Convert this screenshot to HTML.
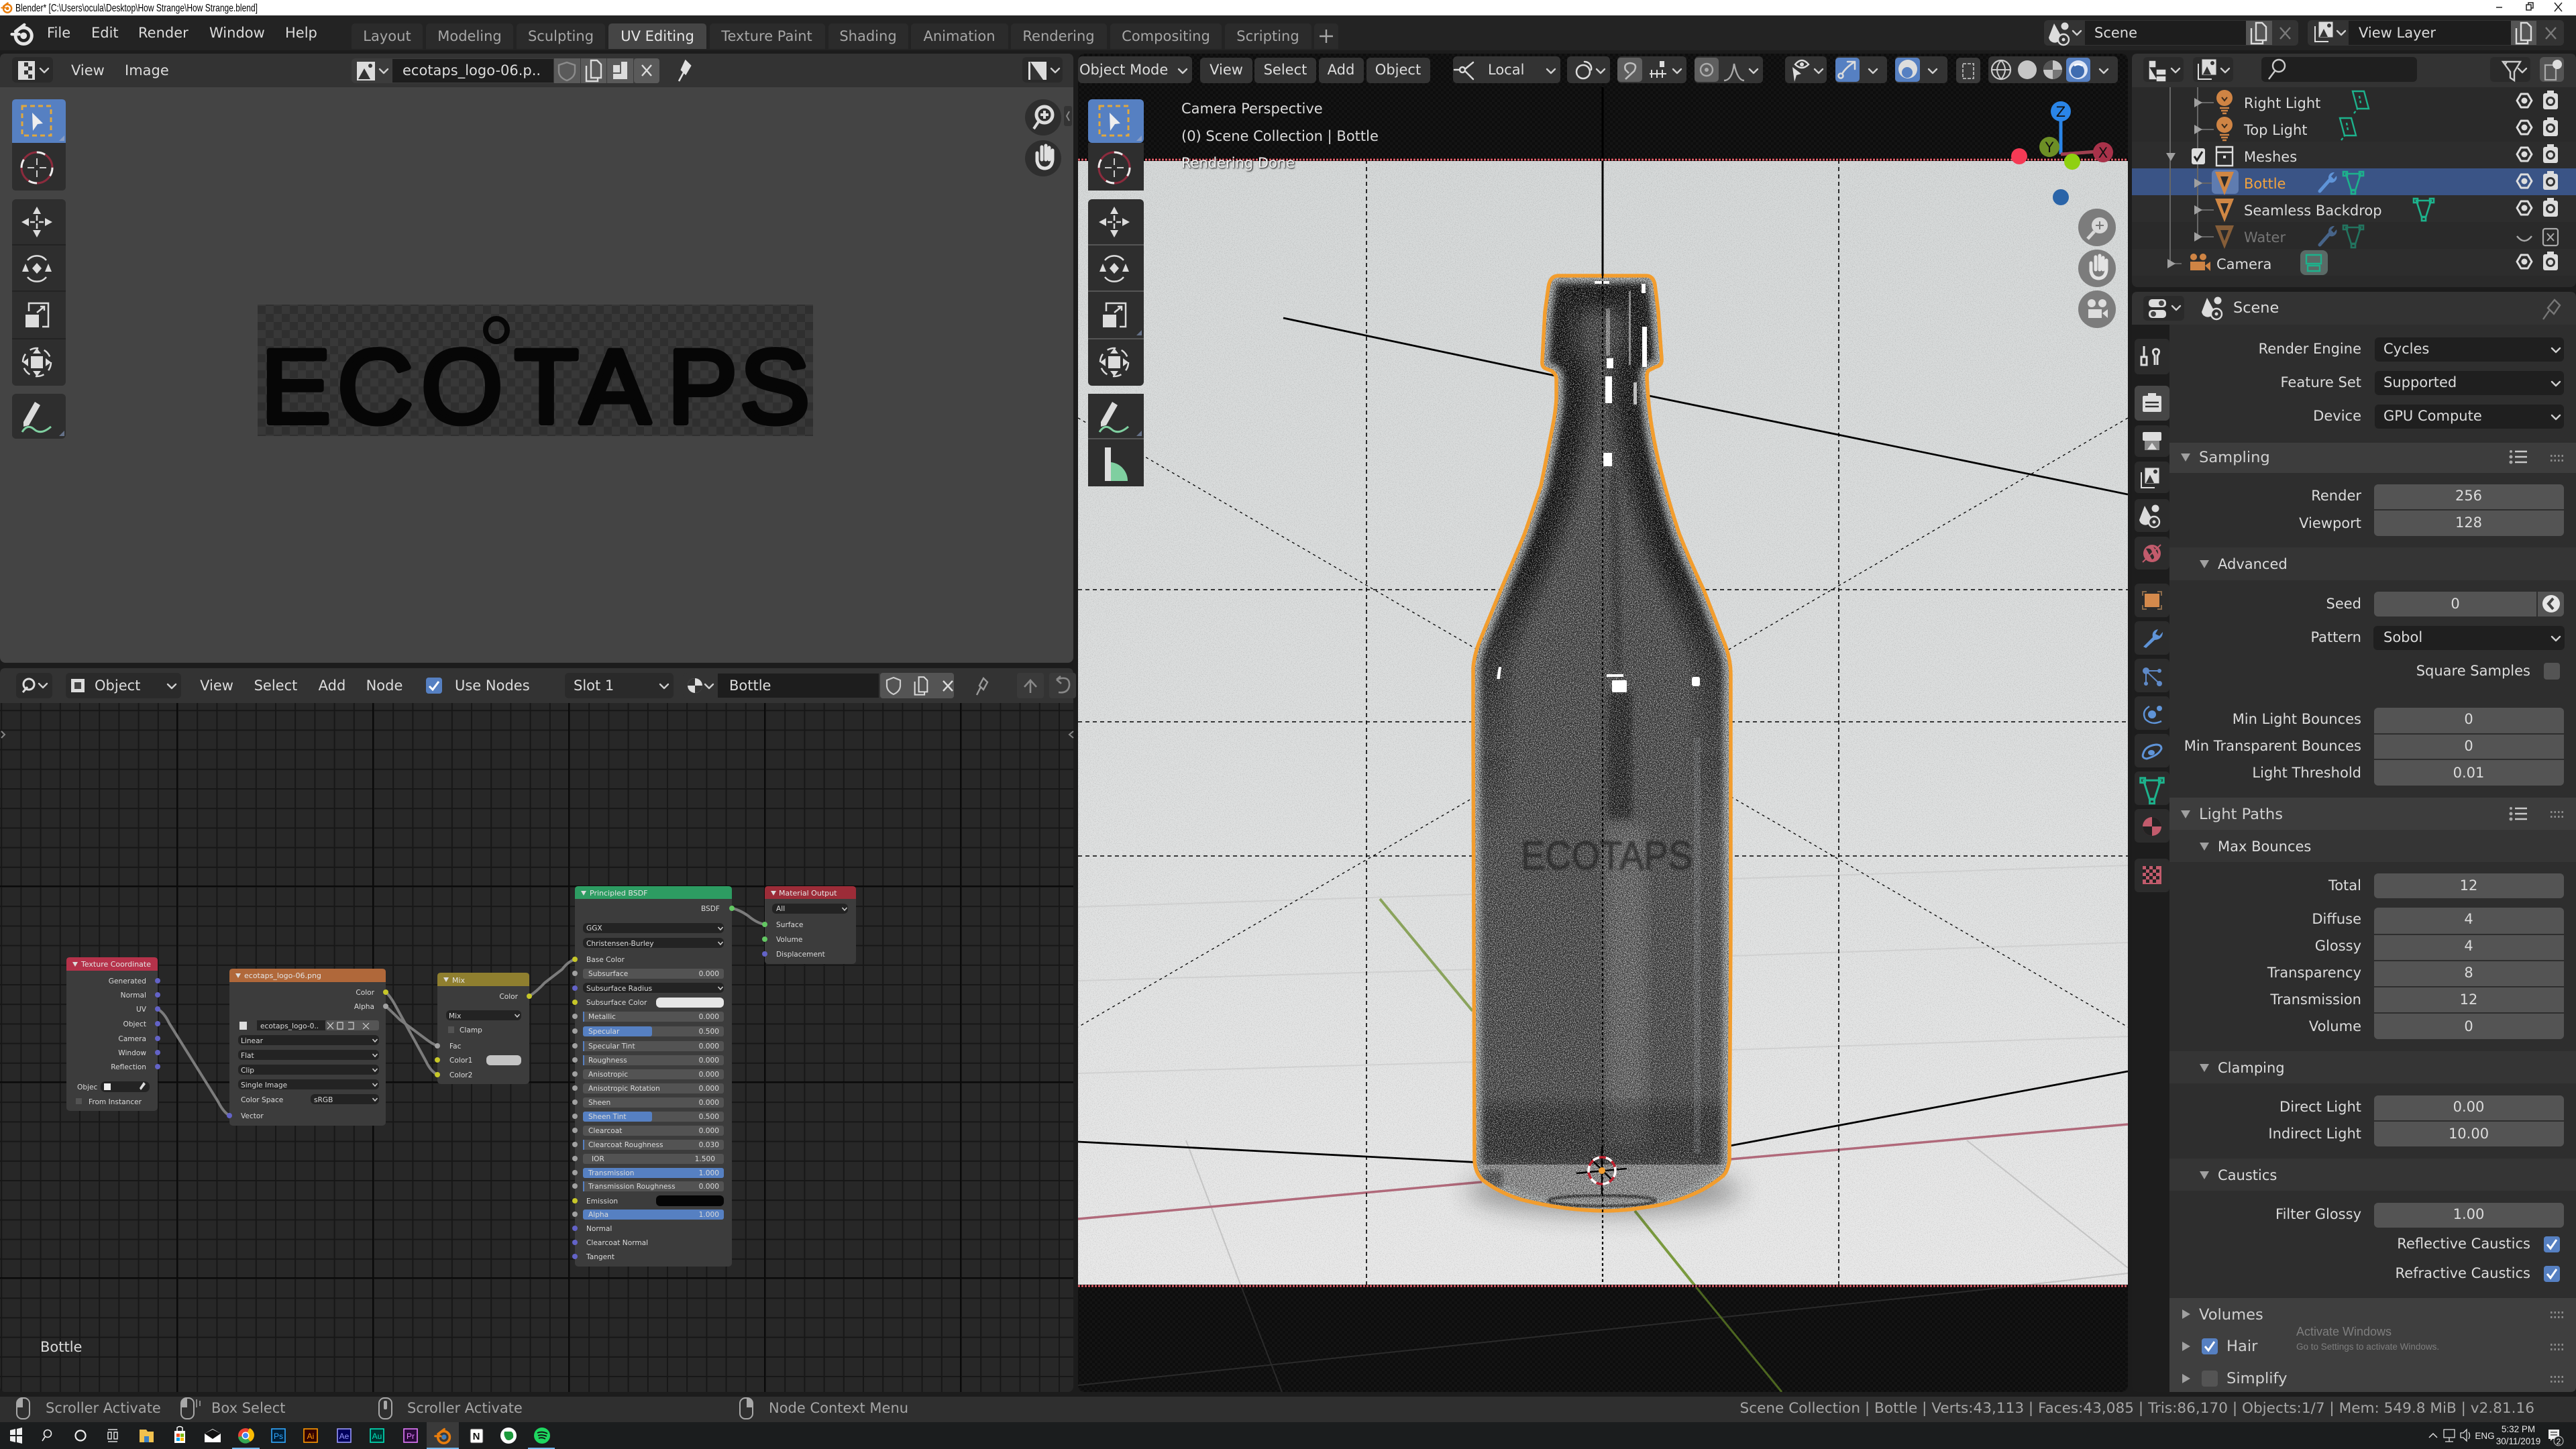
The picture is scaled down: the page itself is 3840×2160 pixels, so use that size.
<!DOCTYPE html>
<html><head><meta charset="utf-8"><title>Blender</title>
<style>
html,body{margin:0;padding:0;background:#1c1c1c;width:3840px;height:2160px;overflow:hidden}
svg{display:block}
text{font-family:"DejaVu Sans",sans-serif;font-size:21px;fill:#dcdcdc}
.r{text-anchor:end}.c{text-anchor:middle}
.g{fill:#a6a6a6}
.st{font-size:21.6px}
.ph{font-size:22.6px;fill:#d0d0d0}
.n{font-size:10.6px;fill:#dadada}
.nh{font-size:11px;fill:#e4e4e4}
.w{font-family:"Liberation Sans",sans-serif;fill:#000;font-size:16px}
.lg{font-family:"Liberation Sans",sans-serif}
.tb{font-family:"Liberation Sans",sans-serif;fill:#e8e8e8;font-size:15px}
.f{fill:#545454}.dk{fill:#1f1f1f}.b{fill:#333}.btn{fill:#3a3a3a}
.nf{fill:#535353}.nd{fill:#232323}.bl{fill:#5680c2}
.s{fill:none;stroke:#dcdcdc;stroke-width:2.5;stroke-linecap:round;stroke-linejoin:round}
</style></head>
<body>
<svg xmlns="http://www.w3.org/2000/svg" width="3840" height="2160" viewBox="0 0 3840 2160">
<defs>
<pattern id="dots" width="8" height="8" patternUnits="userSpaceOnUse"><rect width="8" height="8" fill="#141414"/><rect width="4" height="4" fill="#0d0d0d"/><rect x="4" y="4" width="4" height="4" fill="#0d0d0d"/></pattern>
<pattern id="chk" width="24" height="24" patternUnits="userSpaceOnUse"><rect width="24" height="24" fill="#383838"/><rect width="12" height="12" fill="#2f2f2f"/><rect x="12" y="12" width="12" height="12" fill="#2f2f2f"/></pattern>
<pattern id="grid" x="264" y="1029" width="29.2" height="29.2" patternUnits="userSpaceOnUse"><rect width="29.2" height="29.2" fill="#272727"/><rect width="29.2" height="2" fill="#171717"/><rect width="2" height="29.2" fill="#171717"/></pattern>
<linearGradient id="floor" x1="0" y1="0" x2="0" y2="1"><stop offset="0" stop-color="#d4d7d7"/><stop offset=".5" stop-color="#dbdddd"/><stop offset="1" stop-color="#e8e8e8"/></linearGradient>
<linearGradient id="dkb" gradientUnits="userSpaceOnUse" x1="0" y1="850" x2="0" y2="1250"><stop offset="0" stop-color="#0e0e0e"/><stop offset="1" stop-color="#141414" stop-opacity="0"/></linearGradient>
<filter id="nz" x="0" y="0" width="100%" height="100%" color-interpolation-filters="sRGB"><feTurbulence type="fractalNoise" baseFrequency=".75" numOctaves="2" seed="4"/><feColorMatrix values="2.4 0 0 0 -.7 2.4 0 0 0 -.7 2.4 0 0 0 -.7 0 0 0 0 1"/></filter>
<filter id="b1"><feGaussianBlur stdDeviation="1.2"/></filter>
<filter id="b4"><feGaussianBlur stdDeviation="4"/></filter>
<filter id="b10"><feGaussianBlur stdDeviation="10"/></filter>
<filter id="b22" x="-30%" y="-100%" width="160%" height="300%"><feGaussianBlur stdDeviation="18"/></filter>
<path id="bt" d="M2322 411L2455 411Q2465 412 2467 425L2472 465L2477 535Q2478 545 2468 547L2458 552Q2455 554 2455 562Q2456 590 2460 621Q2466 665 2477 706Q2488 750 2503 795Q2520 838 2540 880L2573 965Q2580 985 2580 1005L2580 1390L2578 1730Q2575 1748 2567 1754Q2545 1772 2517 1783Q2485 1796 2450 1800Q2420 1805 2390 1805Q2330 1804 2267 1788Q2235 1778 2210 1759Q2199 1748 2198 1730L2196 1080L2196 996Q2197 980 2204 960L2237 880Q2255 838 2273 795Q2285 760 2297 724Q2305 685 2313 643Q2319 615 2320 594L2320 565Q2320 558 2313 553L2303 549Q2298 546 2299 538L2303 465L2308 429Q2310 412 2322 411Z"/>
<clipPath id="btc"><use href="#bt"/></clipPath>
<clipPath id="vp"><rect x="1607" y="80" width="1565" height="1995" rx="10"/></clipPath>
<path id="cv" d="M-6-3L0 3L6-3" fill="none" stroke="#cfcfcf" stroke-width="2.4" stroke-linecap="round" stroke-linejoin="round"/>
<path id="cn" d="M-3.5-2L0 2L3.5-2" fill="none" stroke="#cfcfcf" stroke-width="1.5"/>
<path id="ct" d="M0 0H-8L0-8Z" fill="#8a9ec4"/>
<path id="td" d="M-7-5H7L0 7Z" fill="#a0a0a0"/>
<path id="tr" d="M-5-7L7 0L-5 7Z" fill="#a0a0a0"/>
<g id="grip"><path d="M0-3.5h22M0 3.5h22" stroke="#8a8a8a" stroke-width="3" stroke-dasharray="2.5 3"/></g>
<g id="lst" fill="none" stroke="#c8c8c8" stroke-width="2.4"><path d="M-6-8H12M-6 0H12M-6 8H12"/><circle cx="-12" cy="-8" r="2" fill="#aaa" stroke="none"/><circle cx="-12" cy="0" r="2.5" fill="#aaa" stroke="none"/><circle cx="-12" cy="8" r="2.5" fill="#aaa" stroke="none"/></g>
<g id="eye"><path d="M-11 0L-5-10H5L11 0L5 10H-5Z" fill="none" stroke="#ddd" stroke-width="3" stroke-linejoin="round"/><circle r="4.5" fill="#ddd"/></g>
<g id="rcam"><rect x="-11" y="-11" width="22" height="24" rx="3" fill="#ddd"/><rect x="-5" y="-15" width="10" height="5" fill="#ddd"/><circle cy="1" r="7" fill="#333"/><circle cy="1" r="4" fill="#ddd"/></g>
<g id="sel"><rect x="-22" y="-23" width="43" height="44" fill="none" stroke="#e0a83f" stroke-width="3" stroke-dasharray="7 5"/><path d="M-7-13L9 3L1 4L-6 14Z" fill="#eee"/></g>
<g id="cur"><circle r="23" fill="none" stroke="#8c2b3d" stroke-width="3"/><circle r="23" fill="none" stroke="#eee" stroke-width="3" stroke-dasharray="13 23"/><path d="M0-14V-4M0 4V14M-14 0H-4M4 0H14" stroke="#ccc" stroke-width="2"/></g>
<g id="mov" fill="#dcdcdc"><path d="M0-23L6-12H-6ZM0 23L6 12H-6ZM-23 0L-12 6V-6ZM23 0L12 6V-6Z"/><path d="M0-10V-2M0 2V10M-10 0H-3M3 0H10" stroke="#dcdcdc" stroke-width="2.5"/></g>
<g id="rot" fill="#dcdcdc"><path d="M0-8L7 0L0 8L-7 0Z"/><path d="M-14-12A18 18 0 0 1 14-12M-14 13A18 18 0 0 0 14 13" fill="none" stroke="#dcdcdc" stroke-width="2.5"/><path d="M-22 5L-17-7L-12 5ZM22 5L17-7L12 5Z"/></g>
<g id="scl"><rect x="-17" y="-1" width="20" height="19" fill="#dcdcdc"/><path d="M-12-6V-18H17V17H8" fill="none" stroke="#dcdcdc" stroke-width="2.5"/><path d="M0-4L11-13M5-13H11V-7" fill="none" stroke="#dcdcdc" stroke-width="2.5"/></g>
<g id="tfm" fill="#dcdcdc"><rect x="-9" y="-9" width="18" height="18"/><circle r="21" fill="none" stroke="#dcdcdc" stroke-width="2.5" stroke-dasharray="13 9"/><path d="M0-21L6-13H-6ZM0 21L6 13H-6ZM-21 0L-13 6V-6ZM21 0L13 6V-6Z"/></g>
<g id="ann"><path d="M-20 6L-3-24L5-19L-12 11L-20 13Z" fill="#dcdcdc"/><path d="M-22 21Q-14 8-4 17T21 13" fill="none" stroke="#7fcfa0" stroke-width="3"/></g>
<g id="mea"><path d="M-14-26H-5V24H-14Z" fill="#ddd"/><path d="M-5-4A28 28 0 0 1 20 24H-5Z" fill="#7fcfa0"/></g>
<g id="mesh"><path d="M-14-16H14L0 19Z" fill="#d08744"/><path d="M-6-9H6L0 7Z" fill="#2b2b2b"/></g>
<g id="md" fill="none" stroke="#1db28c" stroke-width="2.6"><path d="M-11-12H11L3 13H-3Z"/><rect x="-15" y="-15" width="6" height="6"/><rect x="9" y="-15" width="6" height="6"/><rect x="-3" y="12" width="6" height="6"/></g>
<g id="wr"><path d="M-10 14L5-3" stroke="#5f94d8" stroke-width="5" stroke-linecap="round"/><path d="M3-5A8 8 0 0 1 12-14L7-8L11-4L15-9A8 8 0 0 1 5 1Z" fill="#5f94d8"/></g>
<g id="bulb"><circle cy="-5" r="12" fill="#cf8444"/><path d="M-7 10H7M-5 14H5M-3 18H3" stroke="#cf8444" stroke-width="2.6"/><path d="M-4-6L0-1L4-6" stroke="#3a2a1a" stroke-width="2" fill="none"/></g>
<g id="ld" fill="none" stroke="#1db28c" stroke-width="2.4"><path d="M-11-15H6L13 11L-4 11Z"/><path d="M-1-8L1 3M-9 18L-3 10" stroke-dasharray="4 3"/></g>
<g id="scn"><path d="M-10-14L-18 7A9 9 0 0 0 0 4Z" fill="#dcdcdc"/><circle cx="6" cy="-10" r="5.5" fill="#dcdcdc"/><circle cx="4" cy="10" r="8" fill="#333" stroke="#dcdcdc" stroke-width="2.4"/><circle cx="4" cy="10" r="2.5" fill="#dcdcdc"/></g>
<g id="img"><rect x="-10" y="-15" width="22" height="24" fill="#dcdcdc" stroke="#333" stroke-width="1"/><path d="M-8 8L-2-4L4 8Z" fill="#333"/><circle cx="6" cy="-9" r="3" fill="#333"/><path d="M-15-8V15H5" fill="none" stroke="#dcdcdc" stroke-width="2"/></g>
<g id="copy" fill="none" stroke="#dcdcdc" stroke-width="2.4"><path d="M-11-7V16H6V12M-4-15H5L11-9V11H-4Z"/></g>
<g id="blogo"><circle cx="2" cy="3" r="11" fill="none" stroke="currentColor" stroke-width="4.5"/><circle cx="2" cy="3" r="4.5" fill="currentColor"/><path d="M-14 1H-4M-9-3L3-12" stroke="currentColor" stroke-width="4" stroke-linecap="round"/></g>
<g id="mouse" fill="none" stroke="#a8a8a8" stroke-width="2"><rect x="-9" y="-15" width="19" height="31" rx="8"/><path d="M-9-5V-9A7 7 0 0 1 0-15V-1H-9Z" fill="#a8a8a8" stroke="none"/></g>
</defs>

<!-- window chrome -->
<rect width="3840" height="2160" fill="#1c1c1c"/>
<rect width="3840" height="23" fill="#fff"/>
<use href="#blogo" transform="translate(10 11) scale(.55)" color="#e87d0d"/>
<text class="w" x="23" y="17" textLength="361" lengthAdjust="spacingAndGlyphs">Blender* [C:\Users\ocula\Desktop\How Strange\How Strange.blend]</text>
<path d="M3721 11H3730M3766 7H3773V15H3766ZM3769 7V4H3776V12H3773M3808 4L3819 17M3819 4L3808 17" stroke="#222" stroke-width="1.5" fill="none"/>

<!-- top bar -->
<rect y="23" width="3840" height="52" fill="#232323"/>
<use href="#blogo" transform="translate(33 50) scale(1.1)" color="#e6e6e6"/>
<text x="70" y="56">File</text><text x="136" y="56">Edit</text><text x="206" y="56">Render</text><text x="312" y="56">Window</text><text x="425" y="56">Help</text>
<g fill="#2b2b2b">
<path d="M524 73V41q0-6 6-6H624q6 0 6 6V73Z"/><path d="M635 73V41q0-6 6-6H759q6 0 6 6V73Z"/><path d="M770 73V41q0-6 6-6H896q6 0 6 6V73Z"/><path fill="#454545" d="M907 73V41q0-6 6-6H1047q6 0 6 6V73Z"/><path d="M1058 73V41q0-6 6-6H1224q6 0 6 6V73Z"/><path d="M1235 73V41q0-6 6-6H1348q6 0 6 6V73Z"/><path d="M1358 73V41q0-6 6-6H1497q6 0 6 6V73Z"/><path d="M1507 73V41q0-6 6-6H1644q6 0 6 6V73Z"/><path d="M1655 73V41q0-6 6-6H1815q6 0 6 6V73Z"/><path d="M1826 73V41q0-6 6-6H1949q6 0 6 6V73Z"/><path d="M1959 73V41q0-6 6-6H1989q6 0 6 6V73Z"/>
</g>
<g class="c">
<text class="g c" x="577" y="61">Layout</text><text class="g c" x="700" y="61">Modeling</text><text class="g c" x="836" y="61">Sculpting</text><text class="c" x="980" y="61" style="fill:#e6e6e6">UV Editing</text><text class="g c" x="1143" y="61">Texture Paint</text><text class="g c" x="1294" y="61">Shading</text><text class="g c" x="1430" y="61">Animation</text><text class="g c" x="1578" y="61">Rendering</text><text class="g c" x="1738" y="61">Compositing</text><text class="g c" x="1890" y="61">Scripting</text>
</g>
<path d="M1977 44V64M1967 54H1987" stroke="#a6a6a6" stroke-width="2.4"/>
<rect x="3047" y="30" width="379" height="38" rx="6" fill="#333"/>
<rect x="3108" y="31" width="240" height="36" fill="#1d1d1d"/><rect x="3348" y="31" width="39" height="36" fill="#555"/>
<use href="#scn" x="3072" y="49"/><use href="#cv" x="3096" y="49"/>
<text x="3122" y="56">Scene</text><use href="#copy" x="3367" y="49"/>
<path d="M3399 41L3414 58M3414 41L3399 58" stroke="#7a7a7a" stroke-width="2.4"/>
<rect x="3440" y="30" width="382" height="38" rx="6" fill="#333"/>
<rect x="3501" y="31" width="242" height="36" fill="#1d1d1d"/><rect x="3743" y="31" width="38" height="36" fill="#555"/>
<use href="#img" x="3466" y="47"/><use href="#cv" x="3490" y="49"/>
<text x="3516" y="56">View Layer</text><use href="#copy" x="3762" y="49"/>
<path d="M3795 41L3810 58M3810 41L3795 58" stroke="#7a7a7a" stroke-width="2.4"/>

<!-- image editor -->
<rect x="0" y="80" width="1600" height="908" rx="8" fill="#444"/>
<path d="M0 130V88q0-8 8-8H1592q8 0 8 8V130Z" fill="#333"/>
<rect x="18" y="85" width="61" height="38" rx="6" fill="#2a2a2a"/>
<rect x="27" y="91" width="25" height="28" fill="#dcdcdc"/><path d="M36 93h6v6h-6zM42 99h6v6h-6zM36 105h6v6h-6zM42 111h6v6h-6z" fill="#333"/><use href="#cv" x="66" y="105"/>
<text x="106" y="112">View</text><text x="186" y="112">Image</text>
<rect x="524" y="87" width="459" height="37" rx="6" fill="#3c3c3c"/>
<rect x="585" y="88" width="240" height="35" fill="#1d1d1d"/>
<rect x="826" y="87" width="39" height="37" fill="#5a5a5a"/><rect x="866" y="87" width="38" height="37" fill="#5a5a5a"/><rect x="905" y="87" width="39" height="37" fill="#5a5a5a"/><rect x="945" y="87" width="38" height="37" rx="4" fill="#5a5a5a"/>
<path d="M532 92H559V120H532Z" fill="#dcdcdc"/><path d="M534 118L543 102L552 118Z" fill="#333"/><circle cx="552" cy="98" r="3" fill="#333"/><use href="#cv" x="572" y="106"/>
<text x="600" y="112">ecotaps_logo-06.p..</text>
<path d="M845 93L857 97V107Q856 116 845 120Q834 116 833 107V97Z" fill="none" stroke="#8c8c8c" stroke-width="2.4"/>
<use href="#copy" x="885" y="105"/>
<path d="M914 97H924V108H914ZM926 92H935V118H914V110H926Z" fill="#dcdcdc"/>
<path d="M957 97L971 113M971 97L957 113" stroke="#ddd" stroke-width="2.4"/>
<path d="M1022 91L1029 98L1022 110L1016 104ZM1012 121L1019 108" fill="#e0e0e0" stroke="#e0e0e0" stroke-width="2.6"/>
<rect x="1524" y="85" width="60" height="38" rx="6" fill="#2a2a2a"/>
<path d="M1533 92H1560V119H1533Z" fill="#dcdcdc"/><path d="M1536 92L1555 119H1536Z" fill="#333"/><use href="#cv" x="1573" y="105"/>

<rect x="384" y="454" width="828" height="196" fill="url(#chk)"/>
<text class="lg" x="389 503 628 767 865 995 1103" y="630" style="font-size:156px;fill:#060606;stroke:#060606;stroke-width:8;stroke-linejoin:round">ECOTAPS</text>
<ellipse cx="740" cy="492" rx="16" ry="17" fill="none" stroke="#060606" stroke-width="8"/>

<g fill="#2e2e2e">
<path d="M18 213V154q0-6 6-6H92q6 0 6 6V213Z" fill="#5680c2"/>
<path d="M18 213H98V278q0 6-6 6H24q-6 0-6-6Z"/>
<rect x="18" y="297" width="80" height="278" rx="6"/>
<rect x="18" y="587" width="80" height="67" rx="6"/>
</g>
<path d="M18 365H98M18 434H98M18 505H98" stroke="#232323" stroke-width="2"/>
<g transform="translate(55 0)"><use href="#sel" y="181"/><use href="#cur" y="250"/><use href="#mov" y="331"/><use href="#rot" y="400"/><use href="#scl" y="470"/><use href="#tfm" y="540"/><use href="#ann" y="623"/></g>
<use href="#ct" x="96" y="210"/><use href="#ct" x="96" y="650" opacity=".6"/>
<circle cx="1555" cy="175" r="27" fill="#2e2e2e"/><circle cx="1555" cy="236" r="27" fill="#2e2e2e"/>
<circle cx="1557" cy="171" r="12" fill="none" stroke="#dcdcdc" stroke-width="5"/><path d="M1549 180L1541 192M1551 171H1563M1557 165V177" stroke="#dcdcdc" stroke-width="4"/>
<path d="M1546 228V240Q1548 251 1558 251Q1568 250 1569 238V224M1553 238V219M1559 238V217M1564 238V220" fill="none" stroke="#e0e0e0" stroke-width="5" stroke-linecap="round"/>
<rect x="1586" y="158" width="12" height="30" rx="3" fill="#333"/><path d="M1594 166L1590 173L1594 180" fill="none" stroke="#888" stroke-width="2"/>

<!-- node editor -->
<rect x="0" y="996" width="1600" height="1079" rx="8" fill="url(#grid)"/>
<path d="M264 1048V2075M556 1048V2075M848 1048V2075M1140 1048V2075M1432 1048V2075M0 1321H1600M0 1613H1600M0 1905H1600" stroke="#0a0a0a" stroke-width="2"/>
<path d="M0 1048V1004q0-8 8-8H1592q8 0 8 8V1048Z" fill="#333"/>
<rect x="24" y="1003" width="54" height="38" rx="6" fill="#2a2a2a"/>
<circle cx="43" cy="1020" r="8" fill="none" stroke="#ddd" stroke-width="3"/><path d="M34 1032L41 1024" stroke="#ddd" stroke-width="3"/><use href="#cv" x="64" y="1022"/>
<rect x="98" y="1003" width="172" height="38" rx="6" fill="#2a2a2a"/>
<rect x="106" y="1012" width="20" height="20" fill="#dcdcdc"/><rect x="111" y="1017" width="10" height="10" fill="#444"/>
<text x="141" y="1029">Object</text><use href="#cv" x="256" y="1023"/>
<text class="c" x="323" y="1029">View</text><text class="c" x="411" y="1029">Select</text><text class="c" x="495" y="1029">Add</text><text class="c" x="573" y="1029">Node</text>
<rect x="635" y="1010" width="24" height="24" rx="4" class="bl"/><path d="M640 1023L645 1028L654 1016" fill="none" stroke="#fff" stroke-width="3"/>
<text x="678" y="1029">Use Nodes</text>
<rect x="842" y="1003" width="162" height="38" rx="6" fill="#2a2a2a"/><text x="855" y="1029">Slot 1</text><use href="#cv" x="990" y="1023"/>
<rect x="1018" y="1003" width="292" height="38" rx="6" fill="#333"/><rect x="1070" y="1004" width="240" height="36" fill="#1d1d1d"/>
<circle cx="1036" cy="1022" r="11" fill="#dcdcdc"/><path d="M1036 1011A11 11 0 0 0 1025 1022H1036V1033A11 11 0 0 0 1047 1022H1036Z" fill="#333"/><use href="#cv" x="1057" y="1023"/>
<text x="1087" y="1029">Bottle</text>
<rect x="1312" y="1003" width="110" height="38" rx="4" fill="#545454"/>
<path d="M1332 1010L1342 1014V1023Q1341 1031 1332 1035Q1323 1031 1322 1023V1014Z" fill="none" stroke="#ccc" stroke-width="2.2"/>
<use href="#copy" transform="translate(1373 1022) scale(.85)"/>
<path d="M1406 1015L1420 1030M1420 1015L1406 1030" stroke="#ddd" stroke-width="2.4"/>
<path d="M1466 1011L1472 1017L1466 1028L1460 1022ZM1456 1036L1462 1024" fill="none" stroke="#9a9a9a" stroke-width="2.4"/>
<rect x="1516" y="1003" width="40" height="38" rx="4" fill="#3a3a3a"/><rect x="1564" y="1003" width="40" height="38" rx="4" fill="#3a3a3a"/>
<path d="M1527 1024L1536 1014L1545 1024M1536 1014V1033" fill="none" stroke="#888" stroke-width="2.6"/>
<path d="M1575 1013Q1595 1006 1594 1022Q1592 1034 1578 1032M1575 1013L1581 1008M1575 1013L1582 1019" fill="none" stroke="#888" stroke-width="2.6"/>
<path d="M1600 1090L1594 1095L1600 1100M2 1090L7 1095L2 1100" fill="none" stroke="#888" stroke-width="2"/>

<!-- noodles -->
<g fill="none" stroke="#7c7c7c" stroke-width="4">
<path d="M235 1504Q245 1510 252 1525L325 1642Q333 1658 342 1663"/>
<path d="M575 1479Q582 1485 590 1500L635 1582Q642 1597 652 1602"/>
<path d="M575 1500Q582 1506 596 1520L635 1549Q644 1556 652 1559"/>
<path d="M789 1485Q800 1478 812 1465L838 1445Q846 1434 857 1430"/>
<path d="M1091 1354Q1102 1356 1115 1365Q1128 1376 1140 1378"/>
</g>
<!-- Tex coord node -->
<rect x="99" y="1427" width="136" height="229" rx="5" fill="#3c3c3c"/>
<path d="M99 1447V1432q0-5 5-5H230q5 0 5 5V1447Z" fill="#b5324a"/>
<path d="M108 1434H116L112 1441Z" fill="#ddd"/><text class="nh" x="121" y="1441" textLength="104" lengthAdjust="spacingAndGlyphs">Texture Coordinate</text>
<g class="n"><text class="n r" x="218" y="1466">Generated</text><text class="n r" x="218" y="1487">Normal</text><text class="n r" x="218" y="1508">UV</text><text class="n r" x="218" y="1530">Object</text><text class="n r" x="218" y="1552">Camera</text><text class="n r" x="218" y="1573">Window</text><text class="n r" x="218" y="1594">Reflection</text>
<text class="n" x="115" y="1624">Objec</text><text class="n" x="132" y="1646">From Instancer</text></g>
<rect x="150" y="1612" width="73" height="16" rx="7" class="nd"/><rect x="155" y="1615" width="10" height="10" fill="#eee"/><path d="M214 1613L208 1622L210 1625L217 1616Z" fill="#ddd"/>
<rect x="113" y="1637" width="9" height="9" class="nf"/>
<g fill="#6363c7"><circle cx="235" cy="1462" r="4"/><circle cx="235" cy="1483" r="4"/><circle cx="235" cy="1504" r="4"/><circle cx="235" cy="1526" r="4"/><circle cx="235" cy="1548" r="4"/><circle cx="235" cy="1569" r="4"/><circle cx="235" cy="1590" r="4"/></g>
<!-- Image node -->
<rect x="342" y="1444" width="233" height="234" rx="5" fill="#3c3c3c"/>
<path d="M342 1464V1449q0-5 5-5H570q5 0 5 5V1464Z" fill="#b0683a"/>
<path d="M351 1451H359L355 1458Z" fill="#ddd"/><text class="nh" x="364" y="1458">ecotaps_logo-06.png</text>
<text class="n r" x="558" y="1483">Color</text><text class="n r" x="558" y="1504">Alpha</text>
<rect x="355" y="1521" width="210" height="15" rx="5" fill="#3d3d3d"/><rect x="383" y="1521" width="102" height="15" class="nd"/><rect x="485" y="1521" width="80" height="15" rx="3" fill="#555"/>
<rect x="357" y="1523" width="11" height="12" fill="#ddd"/><path d="M488 1524L497 1534M497 1524L488 1534M503 1524H511V1534H503ZM519 1524H527V1534H519M541 1525L550 1534M550 1525L541 1534" fill="none" stroke="#d0d0d0" stroke-width="1.2"/>
<text class="n" x="388" y="1533">ecotaps_logo-0..</text>
<g class="nd"><rect class="nd" x="355" y="1543" width="210" height="15" rx="6"/><rect class="nd" x="355" y="1565" width="210" height="15" rx="6"/><rect class="nd" x="355" y="1587" width="210" height="15" rx="6"/><rect class="nd" x="355" y="1609" width="210" height="15" rx="6"/><rect class="nd" x="463" y="1631" width="102" height="15" rx="6"/></g>
<use href="#cn" x="559" y="1551"/><use href="#cn" x="559" y="1573"/><use href="#cn" x="559" y="1595"/><use href="#cn" x="559" y="1617"/><use href="#cn" x="559" y="1639"/>
<text class="n" x="359" y="1555">Linear</text><text class="n" x="359" y="1577">Flat</text><text class="n" x="359" y="1599">Clip</text><text class="n" x="359" y="1621">Single Image</text><text class="n" x="359" y="1643">Color Space</text><text class="n" x="468" y="1643">sRGB</text><text class="n" x="359" y="1667">Vector</text>
<circle cx="575" cy="1479" r="4" fill="#c7c729"/><circle cx="575" cy="1500" r="4" fill="#a1a1a1"/><circle cx="342" cy="1663" r="4" fill="#6363c7"/>
<!-- Mix -->
<rect x="652" y="1450" width="137" height="166" rx="5" fill="#3c3c3c"/>
<path d="M652 1470V1455q0-5 5-5H784q5 0 5 5V1470Z" fill="#8f7f2f"/>
<path d="M661 1457H669L665 1464Z" fill="#ddd"/><text class="nh" x="674" y="1465">Mix</text>
<text class="n r" x="772" y="1489">Color</text>
<rect x="665" y="1506" width="112" height="15" rx="6" class="nd"/><text class="n" x="669" y="1518">Mix</text><use href="#cn" x="771" y="1514"/>
<rect x="668" y="1530" width="9" height="10" class="nf"/><text class="n" x="685" y="1539">Clamp</text>
<text class="n" x="670" y="1563">Fac</text><text class="n" x="670" y="1584">Color1</text><text class="n" x="670" y="1606">Color2</text>
<rect x="725" y="1573" width="52" height="15" rx="6" fill="#c4c4c4"/>
<circle cx="652" cy="1559" r="4" fill="#a1a1a1"/><circle cx="652" cy="1580" r="4" fill="#c7c729"/><circle cx="652" cy="1602" r="4" fill="#c7c729"/><circle cx="789" cy="1485" r="4" fill="#c7c729"/>
<!-- Principled -->
<rect x="857" y="1321" width="234" height="567" rx="5" fill="#3c3c3c"/>
<path d="M857 1340V1326q0-5 5-5H1086q5 0 5 5V1340Z" fill="#2d9c62"/>
<path d="M866 1328H874L870 1335Z" fill="#ddd"/><text class="nh" x="879" y="1335">Principled BSDF</text>
<text class="n r" x="1073" y="1358">BSDF</text>
<rect class="nd" x="869" y="1376" width="210" height="15" rx="6"/><rect class="nd" x="869" y="1398" width="210" height="15" rx="6"/><rect class="nd" x="869" y="1465" width="210" height="15" rx="6"/>
<use href="#cn" x="1074" y="1384"/><use href="#cn" x="1074" y="1406"/><use href="#cn" x="1074" y="1473"/>
<text class="n" x="874" y="1387">GGX</text><text class="n" x="874" y="1410">Christensen-Burley</text><text class="n" x="874" y="1434">Base Color</text><text class="n" x="874" y="1477">Subsurface Radius</text><text class="n" x="874" y="1498">Subsurface Color</text>
<rect x="978" y="1487" width="101" height="15" rx="6" fill="#e6e6e6"/>
<g>
<rect class="nf" x="869" y="1444" width="210" height="15" rx="3"/><rect class="nf" x="869" y="1508" width="210" height="15" rx="3"/><rect class="nf" x="869" y="1530" width="210" height="15" rx="3"/><rect class="nf" x="869" y="1552" width="210" height="15" rx="3"/><rect class="nf" x="869" y="1573" width="210" height="15" rx="3"/><rect class="nf" x="869" y="1594" width="210" height="15" rx="3"/><rect class="nf" x="869" y="1615" width="210" height="15" rx="3"/><rect class="nf" x="869" y="1636" width="210" height="15" rx="3"/><rect class="nf" x="869" y="1657" width="210" height="15" rx="3"/><rect class="nf" x="869" y="1678" width="210" height="15" rx="3"/><rect class="nf" x="869" y="1699" width="210" height="15" rx="3"/><rect class="nf" x="869" y="1720" width="210" height="15" rx="3"/><rect class="nf" x="869" y="1761" width="210" height="15" rx="3"/>
<rect class="bl" x="869" y="1530" width="103" height="15" rx="3"/><rect class="bl" x="869" y="1657" width="103" height="15" rx="3"/><rect class="bl" x="869" y="1741" width="210" height="15" rx="3"/><rect class="bl" x="869" y="1803" width="210" height="15" rx="3"/>
<rect class="bl" x="869" y="1508" width="2" height="15"/><rect class="bl" x="869" y="1552" width="2" height="15"/><rect class="bl" x="869" y="1573" width="2" height="15"/><rect class="bl" x="869" y="1699" width="2" height="15"/><rect class="bl" x="869" y="1761" width="2" height="15"/>
</g>
<text class="n" x="877" y="1455">Subsurface</text><text class="n r" x="1072" y="1455">0.000</text>
<text class="n" x="877" y="1519">Metallic</text><text class="n r" x="1072" y="1519">0.000</text>
<text class="n" x="877" y="1541">Specular</text><text class="n r" x="1072" y="1541">0.500</text>
<text class="n" x="877" y="1563">Specular Tint</text><text class="n r" x="1072" y="1563">0.000</text>
<text class="n" x="877" y="1584">Roughness</text><text class="n r" x="1072" y="1584">0.000</text>
<text class="n" x="877" y="1605">Anisotropic</text><text class="n r" x="1072" y="1605">0.000</text>
<text class="n" x="877" y="1626">Anisotropic Rotation</text><text class="n r" x="1072" y="1626">0.000</text>
<text class="n" x="877" y="1647">Sheen</text><text class="n r" x="1072" y="1647">0.000</text>
<text class="n" x="877" y="1668">Sheen Tint</text><text class="n r" x="1072" y="1668">0.500</text>
<text class="n" x="877" y="1689">Clearcoat</text><text class="n r" x="1072" y="1689">0.000</text>
<text class="n" x="877" y="1710">Clearcoat Roughness</text><text class="n r" x="1072" y="1710">0.030</text>
<text class="n" x="882" y="1731">IOR</text><text class="n r" x="1066" y="1731">1.500</text>
<text class="n" x="877" y="1752">Transmission</text><text class="n r" x="1072" y="1752">1.000</text>
<text class="n" x="877" y="1772">Transmission Roughness</text><text class="n r" x="1072" y="1772">0.000</text>
<text class="n" x="874" y="1794">Emission</text><rect x="978" y="1782" width="101" height="16" rx="6" fill="#050505"/>
<text class="n" x="877" y="1814">Alpha</text><text class="n r" x="1072" y="1814">1.000</text>
<text class="n" x="874" y="1835">Normal</text><text class="n" x="874" y="1856">Clearcoat Normal</text><text class="n" x="874" y="1877">Tangent</text>
<g fill="#a1a1a1"><circle cx="857" cy="1451" r="4"/><circle cx="857" cy="1515" r="4"/><circle cx="857" cy="1537" r="4"/><circle cx="857" cy="1559" r="4"/><circle cx="857" cy="1580" r="4"/><circle cx="857" cy="1601" r="4"/><circle cx="857" cy="1622" r="4"/><circle cx="857" cy="1643" r="4"/><circle cx="857" cy="1664" r="4"/><circle cx="857" cy="1685" r="4"/><circle cx="857" cy="1706" r="4"/><circle cx="857" cy="1727" r="4"/><circle cx="857" cy="1748" r="4"/><circle cx="857" cy="1768" r="4"/><circle cx="857" cy="1810" r="4"/></g>
<g fill="#c7c729"><circle cx="857" cy="1430" r="4"/><circle cx="857" cy="1494" r="4"/><circle cx="857" cy="1790" r="4"/></g>
<g fill="#6363c7"><circle cx="857" cy="1473" r="4"/><circle cx="857" cy="1831" r="4"/><circle cx="857" cy="1852" r="4"/><circle cx="857" cy="1873" r="4"/></g>
<circle cx="1091" cy="1354" r="4" fill="#63c763"/>
<!-- Material output -->
<rect x="1140" y="1321" width="136" height="116" rx="5" fill="#3c3c3c"/>
<path d="M1140 1340V1326q0-5 5-5H1271q5 0 5 5V1340Z" fill="#9c2c38"/>
<path d="M1149 1328H1157L1153 1335Z" fill="#ddd"/><text class="nh" x="1161" y="1335">Material Output</text>
<rect class="nd" x="1151" y="1347" width="113" height="15" rx="6"/><text class="n" x="1157" y="1358">All</text><use href="#cn" x="1259" y="1355"/>
<text class="n" x="1157" y="1382">Surface</text><text class="n" x="1157" y="1404">Volume</text><text class="n" x="1157" y="1426">Displacement</text>
<circle cx="1140" cy="1378" r="4" fill="#63c763"/><circle cx="1140" cy="1400" r="4" fill="#63c763"/><circle cx="1140" cy="1422" r="4" fill="#6363c7"/>
<text x="60" y="2015">Bottle</text>

<!-- 3D viewport -->
<g clip-path="url(#vp)">
<rect x="1607" y="80" width="1565" height="1995" fill="url(#dots)"/>
<path d="M1850 1917L1911 2075M1607 2065L3008 1917" stroke="#2a2a2a" stroke-width="2" fill="none"/>
<path d="M2527 1917L2656 2075" stroke="#4d6620" stroke-width="3"/>
<rect x="1607" y="238" width="1565" height="1679" fill="url(#floor)"/>
<rect x="1607" y="238" width="1565" height="1679" filter="url(#nz)" opacity=".08" style="mix-blend-mode:hard-light"/>
<g fill="none" stroke="#c4c4c4" stroke-width="2">
<path d="M1768 1700L1850 1917M2932 1700L3172 1890M3172 1898L3008 1917"/>
<path d="M1607 1352L2197 1333M2580 1310L3172 1290M1607 1462L2197 1445M2580 1425L3172 1405M1607 1600L2197 1583M2580 1565L3172 1545" opacity=".55"/>
</g>
<path d="M2057 1340L2195 1507" stroke="#8aa35c" stroke-width="4"/>
<path d="M2437 1805L2527 1917" stroke="#7a9a3e" stroke-width="4"/>
<path d="M1607 1817L2209 1762M2580 1728L3172 1676" stroke="#b0697a" stroke-width="3.5" fill="none"/>
<ellipse cx="2390" cy="1775" rx="205" ry="36" fill="#222" opacity=".38" filter="url(#b22)"/>

<!-- camera guides -->
<g fill="none" stroke="#000">
<path d="M2037 238V1917M2741 238V1917" stroke-width="1.6" stroke-dasharray="6 5"/>
<path d="M1607 879H3172M1607 1276H3172M1607 1076H2200M2580 1076H3172" stroke-width="1.6" stroke-dasharray="6 5"/>
<path d="M1607 623L3172 1531M3172 623L1607 1531" stroke-width="1.3" stroke-dasharray="4 5"/>
<path d="M1913 474L2318 560" stroke-width="2.8"/>
<path d="M2405 579L3172 737" stroke-width="2.8"/>
<path d="M1607 1702L2267 1736" stroke-width="2.8"/>
<path d="M3172 1597L2568 1710" stroke-width="2.8"/>
</g>

<!-- bottle -->
<g clip-path="url(#btc)">
<rect x="2180" y="400" width="420" height="1420" fill="#484848"/>
<rect x="2295" y="415" width="50" height="140" fill="#666"/><rect x="2437" y="415" width="45" height="140" fill="#626262"/>
<rect x="2343" y="420" width="94" height="130" fill="#414141"/>
<rect x="2437" y="420" width="6" height="130" fill="#1c1c1c"/>
<rect x="2393" y="1230" width="62" height="480" fill="#fff" opacity=".14" filter="url(#b10)"/>
<rect x="2180" y="1645" width="420" height="90" fill="#000" opacity=".35" filter="url(#b10)"/>
<rect x="2180" y="1736" width="420" height="80" fill="#8a8a8a"/>
<use href="#bt" fill="none" stroke="url(#dkb)" stroke-width="100" opacity=".95" filter="url(#b10)"/>
<use href="#bt" fill="none" stroke="#9da1a1" stroke-width="22" filter="url(#b4)"/>
<path d="M2400 700L2412 700L2418 1000L2405 1000Z" fill="#1e1e1e" opacity=".55" filter="url(#b4)"/>
<rect x="2397" y="1030" width="36" height="190" fill="#191919" opacity=".7" filter="url(#b4)"/>
<rect x="2525" y="1100" width="10" height="620" fill="#a8acb0" opacity=".22"/>
<ellipse cx="2388" cy="1790" rx="80" ry="8" fill="none" stroke="#111" stroke-width="4" opacity=".8" filter="url(#b1)"/>
<rect x="2210" y="1745" width="30" height="25" fill="#222" opacity=".6" filter="url(#b4)"/>
<rect x="2180" y="400" width="420" height="1420" filter="url(#nz)" opacity=".55" style="mix-blend-mode:hard-light"/>
<g fill="#fff">
<rect x="2393" y="561" width="10" height="40"/><rect x="2390" y="675" width="13" height="20"/><rect x="2395" y="534" width="10" height="15"/>
<rect x="2448" y="487" width="7" height="60"/><rect x="2428" y="434" width="3" height="110" opacity=".45"/><rect x="2435" y="570" width="5" height="33" opacity=".7"/>
<rect x="2394" y="460" width="6" height="70" opacity=".35"/><rect x="2447" y="423" width="6" height="14"/>
<rect x="2403" y="1014" width="22" height="18" rx="2"/><rect x="2395" y="1005" width="25" height="4"/><rect x="2522" y="1009" width="12" height="14" rx="3"/><path d="M2231 1012L2234 994H2238L2236 1012Z"/>
<rect x="2377" y="419" width="22" height="4"/>
</g>
<text class="lg" x="2267" y="1296" textLength="256" lengthAdjust="spacingAndGlyphs" filter="url(#b1)" style="font-size:60px;fill:#1e1e1e;opacity:.62;stroke:#1e1e1e;stroke-width:1">ECOTAPS</text>
</g>
<use href="#bt" fill="none" stroke="#f29d2e" stroke-width="5.5" stroke-linejoin="round"/>
<path d="M2389 130V411" stroke="#000" stroke-width="3"/>
<path d="M2389 411V1917" stroke="#000" stroke-width="2.2" stroke-dasharray="4 4"/>
<path d="M1607 238H3172M1607 1917H3172" stroke="#000" stroke-width="4"/><path d="M1607 238H3172M1607 1917H3172" stroke="#e0606a" stroke-width="3" stroke-dasharray="3 2"/>
<path d="M2350 1749L2425 1742M2372 1728L2404 1760M2388 1710V1780" stroke="#000" stroke-width="2.5"/>
<circle cx="2388" cy="1745" r="20" fill="none" stroke="#c0202e" stroke-width="3.5"/><circle cx="2388" cy="1745" r="20" fill="none" stroke="#fff" stroke-width="3.5" stroke-dasharray="10 10"/>
<circle cx="2388" cy="1745" r="5" fill="#f29d2e"/>

<!-- viewport header -->
<rect x="1607" y="84" width="170" height="40" rx="6" fill="#333"/><rect x="1789" y="86" width="78" height="38" rx="6" fill="#333"/><rect x="1870" y="86" width="92" height="38" rx="6" fill="#333"/><rect x="1966" y="86" width="67" height="38" rx="6" fill="#333"/><rect x="2037" y="86" width="95" height="38" rx="6" fill="#333"/>
<rect x="2166" y="84" width="160" height="40" rx="6" fill="#333"/><rect x="2336" y="84" width="64" height="40" rx="6" fill="#333"/><rect x="2411" y="84" width="103" height="40" rx="6" fill="#333"/><rect x="2526" y="84" width="102" height="40" rx="6" fill="#333"/>
<rect x="2661" y="84" width="62" height="40" rx="6" fill="#333"/><rect x="2736" y="84" width="77" height="40" rx="6" fill="#333"/><rect x="2825" y="84" width="78" height="40" rx="6" fill="#333"/><rect x="2916" y="86" width="36" height="38" rx="6" fill="#3a3a3a"/><rect x="2964" y="84" width="193" height="40" rx="6" fill="#333"/>
<rect x="2411" y="86" width="37" height="36" rx="5" fill="#5f5f5f"/><rect x="2526" y="86" width="36" height="36" rx="5" fill="#5f5f5f"/>
<rect x="2736" y="86" width="36" height="36" rx="5" class="bl"/><rect x="2825" y="86" width="37" height="36" rx="5" class="bl"/><rect x="3080" y="86" width="36" height="36" rx="5" class="bl"/>
<text x="1609" y="111">Object Mode</text><use href="#cv" x="1763" y="106"/>
<text class="c" x="1828" y="111">View</text><text class="c" x="1916" y="111">Select</text><text class="c" x="1999" y="111">Add</text><text class="c" x="2084" y="111">Object</text>
<g class="s"><circle cx="2180" cy="104" r="4"/><path d="M2185 102L2196 93M2185 107L2196 118M2176 104H2168"/></g>
<text x="2218" y="111">Local</text><use href="#cv" x="2312" y="106"/>
<g class="s"><circle cx="2360" cy="107" r="10"/><path d="M2362 92A10 10 0 0 1 2372 104"/></g><use href="#cv" x="2386" y="106"/>
<path d="M2423 118L2436 106Q2442 95 2430 94Q2420 95 2423 104L2428 109" fill="none" stroke="#c0c0c0" stroke-width="2.6"/>
<path d="M2459 110H2484M2462 104V116M2470 104V116M2478 104V116" stroke="#ddd" stroke-width="2" fill="none"/><rect x="2474" y="91" width="7" height="9" fill="#ddd"/><use href="#cv" x="2500" y="106"/>
<circle cx="2544" cy="104" r="9" fill="none" stroke="#aaa" stroke-width="2.4"/><circle cx="2544" cy="104" r="3" fill="#aaa"/>
<path d="M2570 120Q2582 120 2585 95Q2590 120 2600 120" fill="none" stroke="#aaa" stroke-width="2.4"/><use href="#cv" x="2614" y="106"/>
<path d="M2672 100L2685 110L2678 112L2675 122Z" fill="#ddd"/><path d="M2676 96Q2686 84 2696 96Q2686 106 2676 96Z" fill="none" stroke="#ddd" stroke-width="2.4"/><circle cx="2686" cy="96" r="3" fill="#ddd"/><use href="#cv" x="2711" y="106"/>
<g class="s"><circle cx="2744" cy="113" r="3.5"/><path d="M2746 110Q2752 100 2765 92M2754 92H2765V103"/></g><use href="#cv" x="2792" y="106"/>
<circle cx="2844" cy="103" r="14" fill="#ddd"/><circle cx="2843" cy="108" r="8" fill="#5680c2"/><use href="#cv" x="2881" y="106"/>
<rect x="2926" y="95" width="16" height="22" fill="none" stroke="#aaa" stroke-width="2" stroke-dasharray="5 2"/>
<circle cx="2983" cy="104" r="14" fill="none" stroke="#ccc" stroke-width="2.2"/><path d="M2969 104H2997M2983 90Q2971 104 2983 118Q2995 104 2983 90" fill="none" stroke="#ccc" stroke-width="2"/>
<circle cx="3022" cy="104" r="14" fill="#c6c6c6"/>
<circle cx="3060" cy="104" r="14" fill="#c6c6c6"/><path d="M3060 104V90A14 14 0 0 0 3046 104Z" fill="#555"/><path d="M3060 104H3074A14 14 0 0 1 3060 118Z" fill="#777"/>
<circle cx="3098" cy="104" r="14" fill="#dde5f5"/><circle cx="3097" cy="106" r="10" fill="#3f6cb0"/><path d="M3092 98Q3098 94 3104 98" stroke="#fff" stroke-width="2.5" fill="none"/>
<use href="#cv" x="3136" y="106"/>
<rect x="1622" y="148" width="83" height="65" rx="6" fill="#5680c2"/><rect x="1622" y="213" width="83" height="71" fill="#2e2e2e"/>
<rect x="1622" y="297" width="83" height="278" rx="6" fill="#2e2e2e"/>
<path d="M1622 365H1705M1622 434H1705M1622 505H1705" stroke="#555" stroke-width="2"/>
<path d="M1622 587h83v138h-83z" fill="#2e2e2e"/><path d="M1622 654H1705" stroke="#555" stroke-width="2"/>
<g transform="translate(1661 0)"><use href="#sel" y="181"/><use href="#cur" y="250"/><use href="#mov" y="331"/><use href="#rot" y="400"/><use href="#scl" y="470"/><use href="#tfm" y="540"/><use href="#ann" y="623"/><use href="#mea" y="693"/></g>
<use href="#ct" x="1702" y="210"/><use href="#ct" x="1702" y="500" opacity=".6"/><use href="#ct" x="1702" y="650" opacity=".6"/>
<text x="1761" y="169">Camera Perspective</text>
<text x="1761" y="210">(0) Scene Collection | Bottle</text>
<text x="1761" y="250" style="fill:#eee;filter:drop-shadow(1px 1px 1px #000)">Rendering Done</text>
<!-- gizmo -->
<path d="M3072 230V180" stroke="#2a85e8" stroke-width="5"/><path d="M3072 230L3124 226" stroke="#a04050" stroke-width="5"/>
<circle cx="3072" cy="166" r="15" fill="#2a85e8"/><text class="c" x="3072" y="174" style="fill:#111;font-size:21px">Z</text>
<circle cx="3055" cy="219" r="15" fill="#6d8f25"/><text class="c" x="3055" y="227" style="fill:#111;font-size:21px">Y</text>
<circle cx="3135" cy="227" r="15" fill="#a8324a"/><text class="c" x="3135" y="235" style="fill:#111;font-size:21px">X</text>
<circle cx="3010" cy="233" r="12" fill="#f53a55"/><circle cx="3089" cy="241" r="12" fill="#8fd010"/><circle cx="3072" cy="294" r="12" fill="#2a64a8"/>
<g fill="#7c7c7c"><circle cx="3126" cy="339" r="28"/><circle cx="3126" cy="400" r="28"/><circle cx="3126" cy="461" r="28"/></g>
<circle cx="3130" cy="336" r="12" fill="#d8d8d8"/><path d="M3122 345L3112 356" stroke="#d8d8d8" stroke-width="5"/><path d="M3124 336H3136M3130 330V342" stroke="#777" stroke-width="2"/>
<path d="M3117 392V404Q3119 415 3129 415Q3139 414 3140 402V388M3124 402V383M3130 402V381M3135 402V384" fill="none" stroke="#e4e4e4" stroke-width="5" stroke-linecap="round"/>
<circle cx="3118" cy="452" r="6" fill="#dedede"/><circle cx="3134" cy="452" r="6" fill="#dedede"/><rect x="3113" y="461" width="20" height="13" fill="#dedede"/><path d="M3134 467L3142 461V474Z" fill="#dedede"/>
</g>

<!-- outliner -->
<rect x="3178" y="80" width="662" height="348" rx="8" fill="#2a2a2a"/>
<path d="M3178 130V88q0-8 8-8H3832q8 0 8 8V130Z" fill="#333"/>
<rect x="3178" y="211" width="662" height="40" fill="#2d2d2d"/><rect x="3178" y="291" width="662" height="40" fill="#2d2d2d"/><rect x="3178" y="371" width="662" height="40" fill="#2d2d2d"/>
<rect x="3178" y="251" width="662" height="40" fill="#3a5486"/>
<rect x="3195" y="85" width="60" height="37" rx="6" fill="#2a2a2a"/><rect x="3269" y="85" width="60" height="37" rx="6" fill="#2a2a2a"/><rect x="3371" y="85" width="232" height="37" rx="6" fill="#1f1f1f"/><rect x="3712" y="85" width="60" height="37" rx="6" fill="#2a2a2a"/><rect x="3786" y="85" width="36" height="37" rx="6" fill="#555"/>
<path d="M3204 91h9v9h-9zM3215 104h13v7h-13zM3215 114h13v7h-13zM3204 100V118H3215" fill="#ddd" stroke="#ddd" stroke-width=".6"/><use href="#cv" x="3243" y="105"/>
<use href="#img" x="3292" y="103"/><use href="#cv" x="3317" y="105"/>
<circle cx="3397" cy="98" r="9" fill="none" stroke="#ccc" stroke-width="2.4"/><path d="M3391 106L3382 118" stroke="#ccc" stroke-width="2.4"/>
<path d="M3731 92H3737Q3732 100 3737 92H3757L3748 107V120L3742 116V107Z" fill="none" stroke="#ccc" stroke-width="2.4"/><use href="#cv" x="3760" y="105"/>
<rect x="3794" y="97" width="16" height="22" fill="none" stroke="#aaa" stroke-width="2.2"/><circle cx="3812" cy="96" r="7" fill="#ddd"/>
<path d="M3235 130V393H3252" stroke="#666" stroke-width="2" fill="none"/>
<path d="M3276 130V353M3276 153H3300M3276 193H3300M3276 273H3300M3276 313H3300M3276 353H3300" stroke="#666" stroke-width="2" fill="none"/>
<use href="#tr" x="3276" y="153"/><use href="#tr" x="3276" y="193"/><use href="#td" x="3236" y="233"/><use href="#tr" x="3276" y="273"/><use href="#tr" x="3276" y="313"/><use href="#tr" x="3276" y="353"/><use href="#tr" x="3236" y="393"/>
<use href="#bulb" x="3316" y="151"/><use href="#bulb" x="3316" y="191"/>
<rect x="3297" y="253" width="40" height="36" rx="6" fill="#5f7cb0"/>
<use href="#mesh" x="3316" y="272"/><use href="#mesh" x="3316" y="312"/><use href="#mesh" x="3316" y="352" opacity=".55"/>
<path d="M3304 219H3328V247H3304ZM3304 227H3328" fill="none" stroke="#ddd" stroke-width="2.4"/><rect x="3314" y="232" width="4" height="4" fill="#ddd"/>
<rect x="3267" y="221" width="20" height="24" rx="3" fill="#ddd"/><path d="M3271 233L3275 239L3283 226" fill="none" stroke="#222" stroke-width="3"/>
<circle cx="3270" cy="383" r="5" fill="#cf8444"/><circle cx="3284" cy="383" r="5" fill="#cf8444"/><rect x="3265" y="390" width="22" height="13" fill="#cf8444"/><path d="M3287 396L3295 390V404Z" fill="#cf8444"/>
<text x="3345" y="161">Right Light</text><text x="3345" y="201">Top Light</text><text x="3345" y="241">Meshes</text><text x="3345" y="281" style="fill:#f2a33e">Bottle</text><text x="3345" y="321">Seamless Backdrop</text><text x="3345" y="361" style="fill:#757575">Water</text><text x="3304" y="401">Camera</text>
<use href="#ld" x="3518" y="151"/><use href="#ld" x="3499" y="191"/>
<use href="#wr" x="3468" y="271"/><use href="#md" x="3508" y="271"/>
<use href="#md" x="3613" y="311"/>
<use href="#wr" x="3468" y="351" opacity=".55"/><use href="#md" x="3508" y="351" opacity=".55"/>
<rect x="3429" y="373" width="41" height="37" rx="8" fill="#5a6a66"/>
<path d="M3438 380H3460V393H3438ZM3440 396H3458V404H3440Z" fill="none" stroke="#1db28c" stroke-width="2.4"/>
<g><use href="#eye" x="3763" y="150"/><use href="#rcam" x="3802" y="150"/><use href="#eye" x="3763" y="190"/><use href="#rcam" x="3802" y="190"/><use href="#eye" x="3763" y="230"/><use href="#rcam" x="3802" y="230"/><use href="#eye" x="3763" y="270"/><use href="#rcam" x="3802" y="270"/><use href="#eye" x="3763" y="310"/><use href="#rcam" x="3802" y="310"/><use href="#eye" x="3763" y="390"/><use href="#rcam" x="3802" y="390"/></g>
<path d="M3752 352Q3763 366 3774 352" fill="none" stroke="#aaa" stroke-width="2.4"/><rect x="3791" y="341" width="22" height="25" rx="3" fill="none" stroke="#aaa" stroke-width="2.2"/><path d="M3797 348L3807 359M3807 348L3797 359" stroke="#aaa" stroke-width="2"/>

<!-- properties -->
<rect x="3178" y="435" width="662" height="1640" rx="8" fill="#1d1d1d"/>
<path d="M3178 484V443q0-8 8-8H3832q8 0 8 8V484Z" fill="#333"/>
<rect x="3195" y="441" width="61" height="37" rx="6" fill="#2a2a2a"/>
<rect x="3203" y="446" width="26" height="12" rx="5" fill="#ddd"/><rect x="3203" y="462" width="26" height="12" rx="5" fill="#ddd"/><circle cx="3222" cy="452" r="4" fill="#444"/><circle cx="3210" cy="468" r="4" fill="#444"/><use href="#cv" x="3244" y="459"/>
<use href="#scn" x="3300" y="458"/><text x="3329" y="466" style="font-size:22.4px">Scene</text>
<path d="M3808 447L3816 455L3807 468L3798 459ZM3791 476L3800 463" fill="none" stroke="#777" stroke-width="2.4"/>
<path d="M3234 484H3840V2067q0 8-8 8H3234Z" fill="#2e2e2e"/>
<!-- tabs -->
<g fill="#2c2c2c"><rect x="3182" y="505" width="52" height="53" rx="6"/><rect x="3182" y="634" width="52" height="47" rx="6"/><rect x="3182" y="688" width="52" height="47" rx="6"/><rect x="3182" y="744" width="52" height="49" rx="6"/><rect x="3182" y="800" width="52" height="49" rx="6"/><rect x="3182" y="870" width="52" height="50" rx="6"/><rect x="3182" y="926" width="52" height="50" rx="6"/><rect x="3182" y="982" width="52" height="50" rx="6"/><rect x="3182" y="1038" width="52" height="50" rx="6"/><rect x="3182" y="1094" width="52" height="50" rx="6"/><rect x="3182" y="1150" width="52" height="50" rx="6"/><rect x="3182" y="1206" width="52" height="50" rx="6"/><rect x="3182" y="1280" width="52" height="50" rx="6"/></g>
<rect x="3182" y="575" width="52" height="52" rx="6" fill="#464646"/>
<path d="M3196 516V532M3192 532H3200V544H3192ZM3214 520Q3206 522 3212 530V544M3214 520Q3222 522 3216 530V544" fill="none" stroke="#ddd" stroke-width="3"/>
<rect x="3194" y="590" width="28" height="24" rx="2" fill="#ddd"/><rect x="3202" y="586" width="12" height="5" fill="#ddd"/><path d="M3198 600H3218M3198 606H3218" stroke="#333" stroke-width="2.4"/>
<rect x="3194" y="644" width="28" height="13" rx="2" fill="#ddd"/><path d="M3197 657H3219V671H3197Z" fill="#888"/><path d="M3201 670L3208 660L3215 670Z" fill="#ddd"/>
<use href="#img" x="3207" y="712"/>
<use href="#scn" x="3207" y="768"/>
<circle cx="3208" cy="825" r="13" fill="#c25b6c"/><path d="M3199 818Q3208 816 3208 825Q3214 832 3208 834ZM3210 815Q3218 819 3217 826Z" fill="#2c2c2c"/><path d="M3194 838L3221 812" stroke="#c25b6c" stroke-width="2"/>
<rect x="3197" y="885" width="22" height="20" fill="#d58a4c"/><path d="M3194 888V882H3200M3216 882H3222V888M3194 902V908H3200M3222 902V908H3216" fill="none" stroke="#8a6a4a" stroke-width="2"/>
<path d="M3195 964L3209 950Q3207 940 3217 938L3213 945L3219 948L3224 942Q3224 953 3212 954L3199 966Z" fill="#5f94d8"/>
<g fill="#5f8ac8"><circle cx="3199" cy="1000" r="5"/><circle cx="3219" cy="1000" r="3"/><circle cx="3199" cy="1019" r="3"/><circle cx="3219" cy="1019" r="4"/></g><path d="M3199 1000H3219M3199 1000V1019M3199 1000L3219 1019" stroke="#5f8ac8" stroke-width="2"/>
<circle cx="3208" cy="1065" r="6" fill="#5f94d8"/><circle cx="3219" cy="1056" r="4" fill="#5f94d8"/><path d="M3222 1075Q3208 1082 3198 1072Q3192 1060 3204 1053" fill="none" stroke="#5f94d8" stroke-width="2.4"/>
<path d="M3195 1123Q3192 1130 3200 1131Q3218 1126 3222 1116Q3222 1110 3214 1110Q3198 1112 3195 1123Z" fill="none" stroke="#5f94d8" stroke-width="3"/><ellipse cx="3207" cy="1122" rx="5" ry="4" fill="#5f94d8"/>
<g transform="translate(3208 1177)"><use href="#md" transform="scale(1.15)"/></g>
<circle cx="3208" cy="1232" r="14" fill="#c25b6c"/><path d="M3208 1232V1246A14 14 0 0 1 3194 1232ZM3208 1232V1218A14 14 0 0 1 3222 1232Z" fill="#222"/>
<rect x="3194" y="1291" width="28" height="27" fill="#c25b6c"/><path d="M3199 1291h5v5h-5zM3209 1291h5v5h-5zM3194 1296h5v5h-5zM3204 1296h5v5h-5zM3214 1296h5v5h-5zM3199 1301h5v5h-5zM3209 1301h5v5h-5zM3194 1306h5v5h-5zM3204 1306h5v5h-5zM3214 1306h5v5h-5zM3199 1311h5v5h-5zM3209 1311h5v5h-5z" fill="#222"/>
<!-- panel headers -->
<rect x="3234" y="660" width="606" height="45" fill="#3d3d3d"/>
<rect x="3234" y="816" width="606" height="49" fill="#353535"/>
<rect x="3234" y="1189" width="606" height="48" fill="#3d3d3d"/>
<rect x="3234" y="1237" width="606" height="48" fill="#353535"/>
<rect x="3234" y="1567" width="606" height="48" fill="#353535"/>
<rect x="3234" y="1727" width="606" height="48" fill="#353535"/>
<path d="M3234 1935H3840V2067q0 8-8 8H3234Z" fill="#3f3f3f"/>
<!-- dropdowns -->
<rect class="dk" x="3540" y="503" width="282" height="36" rx="6"/><rect class="dk" x="3540" y="553" width="282" height="36" rx="6"/><rect class="dk" x="3540" y="603" width="282" height="36" rx="6"/><rect class="dk" x="3538" y="933" width="285" height="36" rx="6"/>
<text x="3553" y="527">Cycles</text><use href="#cv" x="3810" y="522"/>
<text x="3553" y="577">Supported</text><use href="#cv" x="3810" y="572"/>
<text x="3553" y="627">GPU Compute</text><use href="#cv" x="3810" y="622"/>
<text x="3553" y="957">Sobol</text><use href="#cv" x="3810" y="952"/>
<text class="r" x="3520" y="527">Render Engine</text><text class="r" x="3520" y="577">Feature Set</text><text class="r" x="3520" y="627">Device</text>
<use href="#td" x="3258" y="681"/><text class="ph" x="3278" y="689">Sampling</text><use href="#lst" x="3755" y="681"/><use href="#grip" x="3802" y="683"/>
<!-- fields -->
<rect class="f" x="3539" y="722" width="283" height="77" rx="6"/>
<rect class="f" x="3539" y="882" width="283" height="37" rx="6"/>
<rect class="f" x="3539" y="1055" width="283" height="116" rx="6"/>
<rect class="f" x="3539" y="1302" width="283" height="37" rx="6"/>
<rect class="f" x="3539" y="1353" width="283" height="196" rx="6"/>
<rect class="f" x="3539" y="1633" width="283" height="76" rx="6"/>
<rect class="f" x="3539" y="1793" width="283" height="37" rx="6"/>
<path d="M3539 760H3822M3539 1094H3822M3539 1132H3822M3539 1393H3822M3539 1432H3822M3539 1471H3822M3539 1510H3822M3539 1671H3822M3782 882V919" stroke="#2e2e2e" stroke-width="2"/>
<text class="r" x="3520" y="746">Render</text><text class="c" x="3680" y="746">256</text>
<text class="r" x="3520" y="787">Viewport</text><text class="c" x="3680" y="786">128</text>
<use href="#td" x="3286" y="840"/><text x="3306" y="848">Advanced</text>
<text class="r" x="3520" y="907">Seed</text><text class="c" x="3660" y="907">0</text>
<circle cx="3803" cy="900" r="13" fill="#e6e6e6"/><path d="M3806 892L3799 900L3806 908" fill="none" stroke="#444" stroke-width="4"/>
<text class="r" x="3520" y="957">Pattern</text>
<text class="r" x="3772" y="1007">Square Samples</text><rect class="f" x="3792" y="988" width="24" height="25" rx="4"/>
<text class="r" x="3520" y="1079">Min Light Bounces</text><text class="c" x="3680" y="1079">0</text>
<text class="r" x="3520" y="1119">Min Transparent Bounces</text><text class="c" x="3680" y="1119">0</text>
<text class="r" x="3520" y="1159">Light Threshold</text><text class="c" x="3680" y="1159">0.01</text>
<use href="#td" x="3258" y="1213"/><text class="ph" x="3278" y="1221">Light Paths</text><use href="#lst" x="3755" y="1213"/><use href="#grip" x="3802" y="1214"/>
<use href="#td" x="3286" y="1261"/><text x="3306" y="1269">Max Bounces</text>
<text class="r" x="3520" y="1327">Total</text><text class="c" x="3680" y="1327">12</text>
<text class="r" x="3520" y="1377">Diffuse</text><text class="c" x="3680" y="1377">4</text>
<text class="r" x="3520" y="1417">Glossy</text><text class="c" x="3680" y="1417">4</text>
<text class="r" x="3520" y="1457">Transparency</text><text class="c" x="3680" y="1457">8</text>
<text class="r" x="3520" y="1497">Transmission</text><text class="c" x="3680" y="1497">12</text>
<text class="r" x="3520" y="1537">Volume</text><text class="c" x="3680" y="1537">0</text>
<use href="#td" x="3286" y="1591"/><text x="3306" y="1599">Clamping</text>
<text class="r" x="3520" y="1657">Direct Light</text><text class="c" x="3680" y="1657">0.00</text>
<text class="r" x="3520" y="1697">Indirect Light</text><text class="c" x="3680" y="1697">10.00</text>
<use href="#td" x="3286" y="1751"/><text x="3306" y="1759">Caustics</text>
<text class="r" x="3520" y="1817">Filter Glossy</text><text class="c" x="3680" y="1817">1.00</text>
<text class="r" x="3772" y="1861">Reflective Caustics</text><rect class="bl" x="3792" y="1843" width="24" height="24" rx="4"/><path d="M3797 1855L3802 1861L3811 1848" fill="none" stroke="#fff" stroke-width="3"/>
<text class="r" x="3772" y="1905">Refractive Caustics</text><rect class="bl" x="3792" y="1887" width="24" height="24" rx="4"/><path d="M3797 1899L3802 1905L3811 1892" fill="none" stroke="#fff" stroke-width="3"/>
<use href="#tr" x="3258" y="1959"/><text class="ph" x="3278" y="1967">Volumes</text><use href="#grip" x="3802" y="1960"/>
<use href="#tr" x="3258" y="2007"/><rect class="bl" x="3282" y="1995" width="24" height="24" rx="4"/><path d="M3287 2007L3292 2013L3301 2000" fill="none" stroke="#fff" stroke-width="3"/><text class="ph" x="3319" y="2014">Hair</text><use href="#grip" x="3802" y="2008"/>
<use href="#tr" x="3258" y="2055"/><rect class="f" x="3282" y="2043" width="24" height="24" rx="4"/><text class="ph" x="3319" y="2062">Simplify</text><use href="#grip" x="3802" y="2056"/>
<text class="lg" x="3423" y="1991" style="font-size:18px;fill:#7e7e7e">Activate Windows</text>
<text class="lg" x="3423" y="2012" style="font-size:13.5px;fill:#7e7e7e">Go to Settings to activate Windows.</text>

<!-- status bar -->
<rect y="2082" width="3840" height="38" fill="#2f2f2f"/>
<use href="#mouse" x="34" y="2099"/><text class="g" x="68" y="2106">Scroller Activate</text>
<use href="#mouse" x="279" y="2099"/><path d="M293 2086V2098M298 2088V2096" stroke="#a8a8a8" stroke-width="1.5"/><text class="g" x="315" y="2106">Box Select</text>
<rect x="565" y="2084" width="19" height="31" rx="8" fill="none" stroke="#a8a8a8" stroke-width="2"/><rect x="572" y="2088" width="5" height="13" rx="2" fill="#a8a8a8"/><text class="g" x="607" y="2106">Scroller Activate</text>
<g transform="translate(1113 2099) scale(-1 1)"><use href="#mouse"/></g><text class="g" x="1146" y="2106">Node Context Menu</text>
<text class="g r st" x="3778" y="2106">Scene Collection | Bottle | Verts:43,113 | Faces:43,085 | Tris:86,170 | Objects:1/7 | Mem: 549.8 MiB | v2.81.16</text>

<!-- taskbar -->
<rect y="2120" width="3840" height="40" fill="#1b1d1e"/>
<rect x="636" y="2120" width="48" height="40" fill="#3a3a3a"/>
<path d="M15 2132L23 2130V2139H15ZM25 2130L33 2128V2139H25ZM15 2141H23V2150L15 2148ZM25 2141H33V2152L25 2150Z" fill="#eee"/>
<circle cx="71" cy="2137" r="5.5" fill="none" stroke="#eee" stroke-width="1.6"/><path d="M67 2142L63 2148" stroke="#eee" stroke-width="1.6"/>
<circle cx="120" cy="2140" r="7.5" fill="none" stroke="#eee" stroke-width="2.2"/>
<path d="M161 2131H175M161 2149H175M161 2135V2145H166V2135ZM170 2135V2145H175V2135Z" fill="none" stroke="#ddd" stroke-width="1.5"/>
<path d="M208 2131H218L220 2134H229V2150H208Z" fill="#f1c14e"/><rect x="215" y="2141" width="7" height="9" fill="#3a7fc4"/>
<path d="M260 2133H276V2151H260Z" fill="#fff"/><path d="M264 2133V2128Q268 2125 272 2128V2133" fill="none" stroke="#fff" stroke-width="1.4"/><path d="M263 2137h5v5h-5z" fill="#f25022"/><path d="M269 2137h5v5h-5z" fill="#7fba00"/><path d="M263 2143h5v5h-5z" fill="#00a4ef"/><path d="M269 2143h5v5h-5z" fill="#ffb900"/>
<path d="M305 2137L317 2130L329 2137V2150H305Z" fill="#fff"/><path d="M305 2137L317 2145L329 2137L317 2131Z" fill="#111"/>
<circle cx="366" cy="2140" r="11" fill="#ea4335"/><path d="M366 2140L372 2129A11 11 0 0 1 373 2149Z" fill="#fbbc05"/><path d="M366 2140L373 2149A11 11 0 0 1 355 2142Z" fill="#34a853"/><circle cx="366" cy="2140" r="5.5" fill="#fff"/><circle cx="366" cy="2140" r="4" fill="#4285f4"/>
<rect x="405" y="2130" width="20" height="20" fill="#001e36" stroke="#31a8ff" stroke-width="1.6"/><text class="c lg" x="415" y="2145" style="font-size:12px;fill:#31a8ff">Ps</text>
<rect x="453" y="2130" width="20" height="20" fill="#330000" stroke="#ff9a00" stroke-width="1.6"/><text class="c lg" x="463" y="2145" style="font-size:12px;fill:#ff9a00">Ai</text>
<rect x="503" y="2130" width="20" height="20" fill="#00005b" stroke="#9999ff" stroke-width="1.6"/><text class="c lg" x="513" y="2145" style="font-size:12px;fill:#9999ff">Ae</text>
<rect x="552" y="2130" width="20" height="20" fill="#00322f" stroke="#00e4bb" stroke-width="1.6"/><text class="c lg" x="562" y="2145" style="font-size:12px;fill:#00e4bb">Au</text>
<rect x="602" y="2130" width="20" height="20" fill="#2a0a3a" stroke="#e77cff" stroke-width="1.6"/><text class="c lg" x="612" y="2145" style="font-size:12px;fill:#e77cff">Pr</text>
<use href="#blogo" transform="translate(660 2140) scale(.8)" color="#e87d0d"/><circle cx="662" cy="2142" r="3.5" fill="#3a7fc4"/>
<rect x="701" y="2130" width="19" height="21" rx="2" fill="#fff" stroke="#444"/><text class="c lg" x="710" y="2146" style="font-size:15px;font-weight:bold;fill:#111">N</text>
<circle cx="758" cy="2140" r="12" fill="#fff"/><path d="M752 2134H762Q766 2136 765 2143Q760 2149 755 2146Q750 2140 752 2134Z" fill="#1c9a3c"/>
<circle cx="808" cy="2140" r="12" fill="#1ed760"/><path d="M801 2136Q808 2133 816 2137M802 2140Q808 2138 815 2141M803 2144Q808 2142 813 2145" fill="none" stroke="#111" stroke-width="1.8"/>
<rect x="346" y="2158" width="41" height="2" fill="#76b9ed"/><rect x="636" y="2158" width="48" height="2" fill="#76b9ed"/><rect x="787" y="2158" width="40" height="2" fill="#76b9ed"/>
<path d="M3621 2143L3627 2137L3633 2143" fill="none" stroke="#ddd" stroke-width="1.5"/>
<path d="M3643 2131H3659V2143H3643ZM3651 2143V2149M3645 2149H3657" fill="none" stroke="#ddd" stroke-width="1.3"/>
<path d="M3668 2136H3672L3677 2131V2148L3672 2143H3668Z" fill="none" stroke="#ddd" stroke-width="1.3"/><path d="M3680 2135Q3683 2140 3680 2145" fill="none" stroke="#ddd" stroke-width="1.3"/>
<text class="tb c" x="3704" y="2145" style="font-size:13.5px">ENG</text>
<text class="tb c" x="3754" y="2135" style="font-size:13.5px">5:32 PM</text><text class="tb c" x="3754" y="2153" style="font-size:13.5px">30/11/2019</text>
<path d="M3799 2131H3815V2145H3805L3802 2148V2145H3799Z" fill="#eee"/><path d="M3802 2135H3812M3802 2139H3812" stroke="#333" stroke-width="1.2"/>
<circle cx="3814" cy="2148" r="7" fill="#1b1d1e" stroke="#ccc" stroke-width="1"/><text class="tb c" x="3814" y="2153" style="font-size:12px">2</text>
</svg>
</body></html>
